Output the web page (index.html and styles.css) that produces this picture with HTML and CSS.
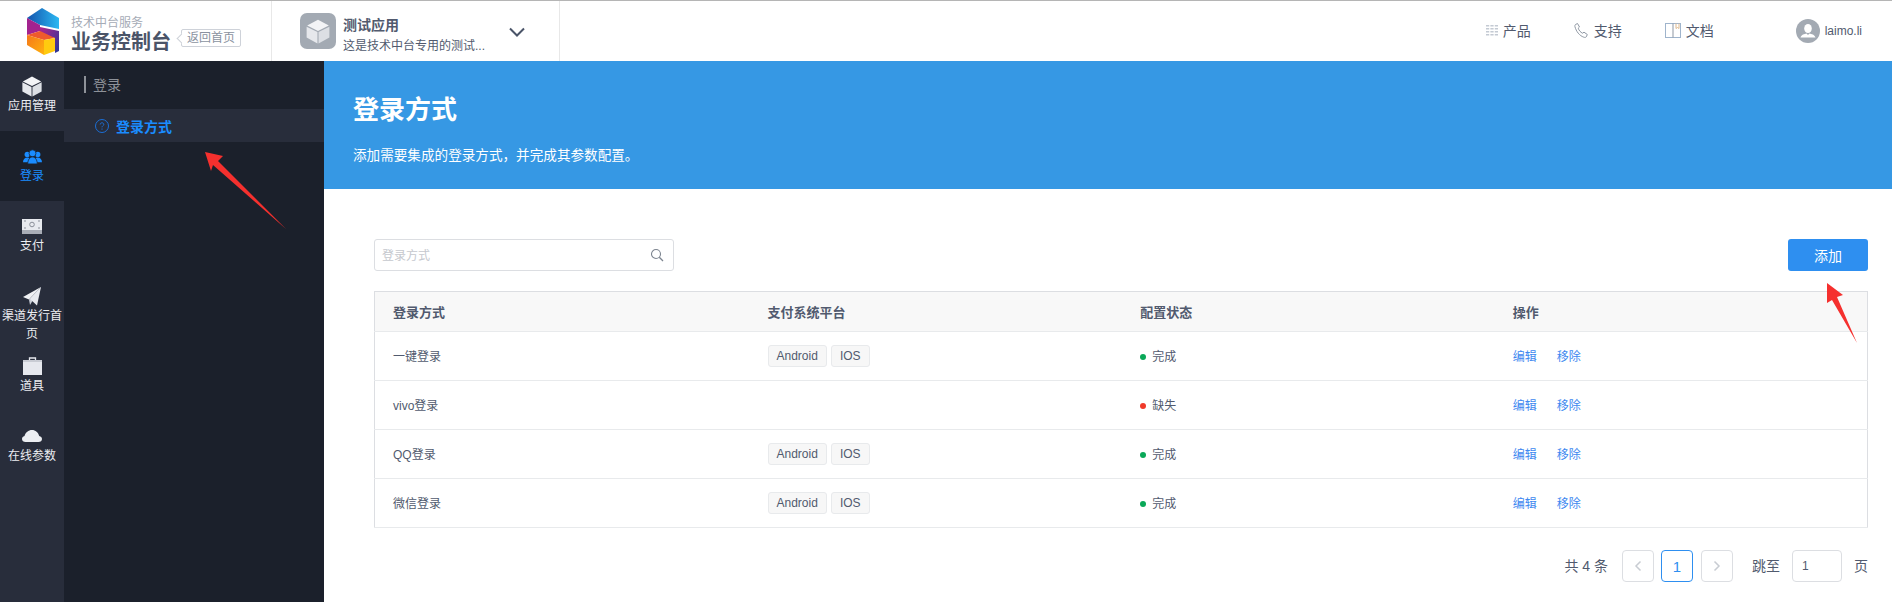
FILE: index.html
```html
<!DOCTYPE html>
<html lang="zh-CN">
<head>
    <meta charset="UTF-8">
    <meta name="viewport" content="width=device-width, initial-scale=1.0">
    <title>业务控制台</title>
    <link rel="stylesheet" href="styles.css">
</head>
<body>
    <header class="topbar">
        <div class="brand">
            <svg class="brand-logo" viewBox="0 0 36 48" width="36" height="48">
                <defs>
                    <linearGradient id="logo-blue" x1="0" y1="0" x2="1" y2="0">
                        <stop offset="0" stop-color="#1253ad"/>
                        <stop offset="1" stop-color="#2cb8f2"/>
                    </linearGradient>
                    <linearGradient id="logo-purple" x1="0" y1="0" x2="1" y2="1">
                        <stop offset="0" stop-color="#b3238c"/>
                        <stop offset="1" stop-color="#24389a"/>
                    </linearGradient>
                    <linearGradient id="logo-orange" x1="0" y1="0" x2="1" y2="1">
                        <stop offset="0" stop-color="#f5781a"/>
                        <stop offset="1" stop-color="#ffb20d"/>
                    </linearGradient>
                </defs>
                <polygon points="17,1 34,11 34,22 15,18 2,11" fill="url(#logo-blue)"/>
                <polygon points="2,11 15,18 15,24 2,28" fill="#a3238f"/>
                <polygon points="15,20 34,24 34,44 30,46 30,31 15,27" fill="url(#logo-purple)"/>
                <polygon points="2,28 15,24 30,31 19,33" fill="#ee5a2c"/>
                <polygon points="2,28 19,33 19,48 2,38" fill="url(#logo-orange)"/>
                <polygon points="19,33 30,31 30,44 19,48" fill="#ffcb0f"/>
            </svg>
            <div class="brand-text">
                <div class="brand-sub">技术中台服务</div>
                <div class="brand-name">业务控制台</div>
            </div>
            <a class="back-tag" href="#">返回首页</a>
        </div>
        <div class="app-picker">
            <div class="app-icon">
                <svg viewBox="0 0 24 24" width="26" height="26">
                    <polygon points="12,1.5 22,7 12,12 2,7" fill="#f3f4f6"/>
                    <polygon points="1.5,8 11.5,13 11.5,23.5 1.5,18" fill="#e6e8ec"/>
                    <polygon points="22.5,8 12.5,13 12.5,23.5 22.5,18" fill="#dcdfe4"/>
                </svg>
            </div>
            <div class="app-info">
                <div class="app-name">测试应用</div>
                <div class="app-desc">这是技术中台专用的测试...</div>
            </div>
            <svg class="app-chevron" viewBox="0 0 16 10" width="16" height="10">
                <path d="M1 1.5l7 7 7-7" fill="none" stroke="#4a5468" stroke-width="2"/>
            </svg>
        </div>
        <nav class="top-links">
            <a href="#">
                <svg viewBox="0 0 12 12" width="12" height="12">
                    <path d="M0 1h3.2v1.6H0zM4.4 1h3.2v1.6H4.400zM8.800 1H12v1.600H8.800zM0 4h3.200v1.600H0zM4.400 4h3.200v1.600H4.400zM8.800 4H12v1.600H8.800zM0 7h3.200v1.600H0zM4.400 7h3.200v1.600H4.400zM8.800 7H12v1.600H8.800zM0 10h3.200v1.600H0zM4.400 10h3.200v1.600H4.400zM8.800 10H12v1.600H8.800z" fill="#c4cad3"/>
                </svg>
                产品
            </a>
            <a href="#">
                <svg viewBox="0 0 15 15" width="15" height="15">
                    <path d="M1.500 1.500l2-1 2 3.500-1.300 1.200c.8 2.300 2.300 4 4.300 5l1.500-1 3.300 2.300-1 2.300c-.5.700-1.500.8-2.500.4C5.500 12.700 2.200 8.500.9 3.500c-.1-.8.100-1.500.6-2z" fill="none" stroke="#8f97a3" stroke-width="1"/>
                </svg>
                支持
            </a>
            <a href="#">
                <svg viewBox="0 0 16 15" width="16" height="15">
                    <rect x=".5" y=".5" width="15" height="14" fill="none" stroke="#9fb4cc"/>
                    <path d="M8 .5v14" stroke="#8f97a3" fill="none"/>
                    <path d="M11 .5v5l1.500-1 1.500 1v-5" fill="none" stroke="#e0b98c"/>
                </svg>
                文档
            </a>
        </nav>
        <div class="user">
            <svg viewBox="0 0 24 24" width="24" height="24">
                <circle cx="12" cy="12" r="12" fill="#a3aab3"/>
                <ellipse cx="12" cy="9.500" rx="3.800" ry="4.500" fill="#fff"/>
                <path d="M4.500 18.500c1-3 4-3.500 6-4l1.500 1.500 1.500-1.500c2 .5 5 1 6 4z" fill="#fff"/>
            </svg>
            <span>laimo.li</span>
        </div>
    </header>

    <div class="layout">
        <aside class="rail">
            <a class="rail-item" href="#">
                <span class="rail-icon">
                    <svg viewBox="0 0 24 24" width="22" height="22">
                        <polygon points="12,1.500 22,7 12,12 2,7" fill="#f3f4f6"/>
                        <polygon points="1.500,8 11.500,13 11.500,23.500 1.500,18" fill="#e6e8ec"/>
                        <polygon points="22.500,8 12.500,13 12.500,23.500 22.500,18" fill="#dcdfe4"/>
                    </svg>
                </span>
                应用管理
            </a>
            <a class="rail-item active" href="#">
                <span class="rail-icon">
                    <svg viewBox="0 0 18 14" width="19" height="15">
                        <circle cx="4" cy="5" r="2.500" fill="#1a8cff"/>
                        <circle cx="14" cy="5" r="2.500" fill="#1a8cff"/>
                        <path d="M0 12.500c0-3 2-4.500 4-4.500s3 1 3 4.500zM11 12.500c0-3.500 1-4.500 3-4.500s4 1.500 4 4.500z" fill="#1a8cff"/>
                        <circle cx="9" cy="4" r="3.300" fill="#1a8cff" stroke="#1b202b" stroke-width=".7"/>
                        <path d="M4.500 14c0-4 2-6.500 4.500-6.500s4.500 2.500 4.500 6.500z" fill="#1a8cff" stroke="#1b202b" stroke-width=".7"/>
                    </svg>
                </span>
                登录
            </a>
            <a class="rail-item" href="#">
                <span class="rail-icon">
                    <svg viewBox="0 0 20 15" width="20" height="15">
                        <rect x="0" y="0" width="20" height="11" fill="#e8eaef"/>
                        <rect x="0" y="11" width="20" height="4" fill="#a9adb6"/>
                        <circle cx="10" cy="5.500" r="2.300" fill="none" stroke="#8b8f99"/>
                        <path d="M2 2h2M16 2h2M2 9h2M16 9h2" stroke="#8b8f99"/>
                    </svg>
                </span>
                支付
            </a>
            <a class="rail-item" href="#">
                <span class="rail-icon">
                    <svg viewBox="0 0 18 19" width="18" height="19">
                        <polygon points="18,0 0,10 6,12.500" fill="#f0f1f4"/>
                        <polygon points="18,0 6,12.500 7,18" fill="#c9cdd6"/>
                        <polygon points="18,0 7,12 14,18.500" fill="#e8eaef"/>
                    </svg>
                </span>
                渠道发行首页
            </a>
            <a class="rail-item" href="#">
                <span class="rail-icon">
                    <svg viewBox="0 0 19 18" width="19" height="18">
                        <path d="M6.500 3V1h6v2" fill="none" stroke="#e6e8ee" stroke-width="1.300"/>
                        <rect x="0" y="3" width="19" height="3" fill="#c9ccd4"/>
                        <rect x="0" y="5" width="19" height="13" fill="#e6e8ee"/>
                    </svg>
                </span>
                道具
            </a>
            <a class="rail-item" href="#">
                <span class="rail-icon">
                    <svg viewBox="0 0 20 12" width="20" height="12">
                        <path d="M3.500 12C1.500 12 0 10.700 0 9c0-1.500 1-2.700 2.500-3C3.500 2.500 6.500 0 10 0c3.500 0 6.300 2.500 7.200 6 1.700.3 2.800 1.500 2.800 3 0 1.700-1.500 3-3.500 3z" fill="#eceef2"/>
                    </svg>
                </span>
                在线参数
            </a>
        </aside>

        <aside class="subnav">
            <div class="subnav-title">登录</div>
            <a class="subnav-item" href="#">
                <svg viewBox="0 0 14 14" width="14" height="14">
                    <circle cx="7" cy="7" r="6.500" fill="none" stroke="#1c6fd6"/>
                    <path d="M5.200 5.500c0-1 .8-1.700 1.800-1.700s1.800.7 1.800 1.600c0 1.300-1.800 1.400-1.800 2.900M7 9.500v1.200" fill="none" stroke="#1c6fd6"/>
                </svg>
                登录方式
            </a>
        </aside>

        <main class="content">
            <section class="banner">
                <h1>登录方式</h1>
                <p>添加需要集成的登录方式，并完成其参数配置。</p>
            </section>
            <section class="panel">
                <div class="toolbar">
                    <div class="search">
                        <span class="search-hint">登录方式</span>
                        <svg viewBox="0 0 14 14" width="14" height="14">
                            <circle cx="6" cy="6" r="4.500" fill="none" stroke="#7d8590" stroke-width="1.100"/>
                            <path d="M9.300 9.300l3.700 3.700" stroke="#7d8590" stroke-width="1.300"/>
                        </svg>
                    </div>
                    <button class="btn-add" type="button">添加</button>
                </div>
                <table class="list">
                    <thead>
                        <tr>
                            <th class="col-name">登录方式</th>
                            <th>支付系统平台</th>
                            <th>配置状态</th>
                            <th>操作</th>
                        </tr>
                    </thead>
                    <tbody>
                        <tr>
                            <td>一键登录</td>
                            <td class="cell-tags"><span class="tag">Android</span><span class="tag">IOS</span></td>
                            <td><span class="dot ok"></span>完成</td>
                            <td><a class="op" href="#">编辑</a><a class="op" href="#">移除</a></td>
                        </tr>
                        <tr>
                            <td>vivo登录</td>
                            <td class="cell-tags"></td>
                            <td><span class="dot bad"></span>缺失</td>
                            <td><a class="op" href="#">编辑</a><a class="op" href="#">移除</a></td>
                        </tr>
                        <tr>
                            <td>QQ登录</td>
                            <td class="cell-tags"><span class="tag">Android</span><span class="tag">IOS</span></td>
                            <td><span class="dot ok"></span>完成</td>
                            <td><a class="op" href="#">编辑</a><a class="op" href="#">移除</a></td>
                        </tr>
                        <tr>
                            <td>微信登录</td>
                            <td class="cell-tags"><span class="tag">Android</span><span class="tag">IOS</span></td>
                            <td><span class="dot ok"></span>完成</td>
                            <td><a class="op" href="#">编辑</a><a class="op" href="#">移除</a></td>
                        </tr>
                    </tbody>
                </table>
                <div class="pager">
                    <span class="pager-total">共 4 条</span>
                    <a class="page-btn" href="#">
                        <svg viewBox="0 0 8 12" width="8" height="12"><path d="M6.500 1.500L2 6l4.500 4.500" fill="none" stroke="#c8ccd2" stroke-width="1.500"/></svg>
                    </a>
                    <a class="page-btn current" href="#">1</a>
                    <a class="page-btn" href="#">
                        <svg viewBox="0 0 8 12" width="8" height="12"><path d="M1.500 1.500L6 6l-4.500 4.500" fill="none" stroke="#c8ccd2" stroke-width="1.500"/></svg>
                    </a>
                    <span class="pager-jump">跳至</span>
                    <div class="pager-input">1</div>
                    <span class="pager-unit">页</span>
                </div>
            </section>
        </main>
    </div>

    <!-- red arrows drawn on top of the screenshot -->
    <svg class="marks" viewBox="0 0 1892 602" width="1892" height="602">
        <polygon points="205,152 223,156 218,161 286,229 213,165 211,171" fill="#f5302e"/>
        <polygon points="1827,283 1843,295 1837,297 1857,343 1832,300 1827,303" fill="#f5302e"/>
    </svg>
</body>
</html>
```

FILE: styles.css
```css
/* General Styles */
* {
    box-sizing: border-box;
}

html, body {
    height: 100%;
}

body {
    margin: 0;
    display: flex;
    flex-direction: column;
    overflow: hidden;
    font-family: "Liberation Sans", "Noto Sans CJK SC", sans-serif;
    font-size: 12px;
    color: #515a6e;
    background-color: #fff;
}

a {
    text-decoration: none;
    color: inherit;
}

/* Header Styles */
.topbar {
    height: 61px;
    flex: none;
    display: flex;
    align-items: center;
    border-top: 1px solid #b5b5b5;
    background-color: #fff;
}

.brand {
    width: 272px;
    height: 100%;
    flex: none;
    display: flex;
    align-items: center;
    padding-left: 25px;
    border-right: 1px solid #e8e8e8;
}

.brand-logo {
    flex: none;
    margin-right: 10px;
}

.brand-text {
    padding-top: 7px;
}

.brand-sub {
    font-size: 12px;
    line-height: 16px;
    margin-bottom: -1px;
    color: #a5abb6;
}

.brand-name {
    font-size: 20px;
    line-height: 24px;
    font-weight: bold;
    color: #4a5468;
}

.back-tag {
    position: relative;
    margin: 14px 0 0 10px;
    width: 60px;
    height: 18px;
    line-height: 16px;
    text-align: center;
    border: 1px solid #ced2d9;
    border-radius: 2px;
    color: #8a92a0;
}

.back-tag::before {
    content: "";
    position: absolute;
    left: -4px;
    top: 5px;
    width: 6px;
    height: 6px;
    background-color: #fff;
    border-left: 1px solid #ced2d9;
    border-bottom: 1px solid #ced2d9;
    transform: rotate(45deg);
}

.app-picker {
    width: 288px;
    height: 100%;
    flex: none;
    display: flex;
    align-items: center;
    padding-left: 28px;
    border-right: 1px solid #e8e8e8;
}

.app-icon {
    width: 36px;
    height: 36px;
    flex: none;
    display: flex;
    align-items: center;
    justify-content: center;
    background-color: #a3aab3;
    border-radius: 7px;
}

.app-info {
    width: 166px;
    margin-left: 7px;
    padding-top: 7px;
}

.app-name {
    font-size: 14px;
    line-height: 20px;
    font-weight: bold;
    color: #515a6e;
}

.app-desc {
    margin-top: 2px;
    font-size: 12px;
    line-height: 18px;
    color: #515a6e;
    white-space: nowrap;
}

.app-chevron {
    margin-top: 2px;
}

.top-links {
    margin-left: auto;
    padding-bottom: 2px;
    display: flex;
    align-items: center;
    gap: 43px;
}

.top-links a {
    display: flex;
    align-items: center;
    gap: 5px;
    font-size: 14px;
    color: #515a6e;
}

.user {
    display: flex;
    align-items: center;
    gap: 5px;
    margin: 0 30px 0 82px;
    font-size: 12px;
    color: #515a6e;
}

/* Side Menus */
.layout {
    flex: 1;
    display: flex;
    min-height: 0;
}

.rail {
    width: 64px;
    flex: none;
    background-color: #282d3b;
}

.rail-item {
    display: block;
    height: 70px;
    padding-top: 15px;
    text-align: center;
    line-height: 18px;
    color: #eceef2;
}

.rail-item.active {
    background-color: #1b202b;
    color: #1a8cff;
}

.rail-icon {
    display: flex;
    align-items: center;
    justify-content: center;
    height: 20px;
    margin-bottom: 1px;
}

.subnav {
    width: 260px;
    flex: none;
    background-color: #1b202b;
}

.subnav-title {
    height: 48px;
    margin-left: 20px;
    padding-left: 9px;
    font-size: 14px;
    line-height: 48px;
    color: #8e9299;
    position: relative;
}

.subnav-title::before {
    content: "";
    position: absolute;
    left: 0;
    top: 15px;
    width: 2px;
    height: 17px;
    background-color: #8e9299;
}

.subnav-item {
    display: flex;
    align-items: center;
    gap: 7px;
    height: 33px;
    padding-left: 31px;
    font-size: 14px;
    font-weight: bold;
    color: #1a8cff;
    background-color: #282d3b;
}

/* Main Content */
.content {
    flex: 1;
    min-width: 0;
}

.banner {
    height: 128px;
    padding: 34px 0 0 29px;
    background-color: #3698e4;
    color: #fff;
}

.banner h1 {
    margin: 0;
    font-size: 26px;
    line-height: 30px;
    font-weight: bold;
}

.banner p {
    margin: 21px 0 0;
    font-size: 13.6px;
    line-height: 20px;
}

.panel {
    padding: 50px 24px 0 50px;
}

.toolbar {
    display: flex;
    justify-content: space-between;
    height: 32px;
    margin-bottom: 20px;
}

.search {
    width: 300px;
    display: flex;
    align-items: center;
    justify-content: space-between;
    padding: 0 9px 0 7px;
    border: 1px solid #dcdee2;
    border-radius: 3px;
    color: #c5c8ce;
}

.search-hint {
    padding-bottom: 2px;
}

.btn-add {
    width: 80px;
    border: none;
    border-radius: 3px;
    font-family: inherit;
    font-size: 14px;
    color: #fff;
    background-color: #2e8ff0;
}

/* Table */
.list {
    width: 100%;
    table-layout: fixed;
    border-collapse: collapse;
    border: 1px solid #dcdee2;
}

.list th, .list td {
    padding: 0 0 0 18px;
    text-align: left;
}

.list .col-name {
    width: 375px;
}

.list th {
    height: 40px;
    font-size: 13px;
    font-weight: bold;
    background-color: #f8f8f8;
    border-bottom: 1px solid #e8eaec;
}

.list td {
    height: 49px;
    padding-bottom: 2px;
    border-bottom: 1px solid #e8eaec;
}

.list .cell-tags {
    padding-bottom: 0;
}

.tag {
    display: inline-block;
    height: 22px;
    line-height: 20px;
    padding: 0 8px;
    margin-right: 4px;
    background-color: #f7f7f7;
    border: 1px solid #e8eaec;
    border-radius: 3px;
}

.dot {
    display: inline-block;
    width: 6px;
    height: 6px;
    margin-right: 6px;
    border-radius: 50%;
    vertical-align: 1px;
}

.dot.ok {
    background-color: #0aa858;
}

.dot.bad {
    background-color: #f03a2a;
}

.op {
    margin-right: 20px;
    color: #3e88f0;
}

/* Pagination */
.pager {
    display: flex;
    align-items: center;
    justify-content: flex-end;
    margin-top: 22px;
    font-size: 14px;
}

.pager-total {
    margin-right: 14px;
    padding-bottom: 3px;
}

.pager-jump, .pager-unit {
    padding-bottom: 2px;
}

.page-btn {
    width: 32px;
    height: 32px;
    margin-right: 7px;
    display: flex;
    align-items: center;
    justify-content: center;
    border: 1px solid #dcdee2;
    border-radius: 4px;
}

.page-btn.current {
    margin-right: 8px;
    border-color: #2e8ff0;
    color: #2e8ff0;
    font-size: 15px;
}

.pager-jump {
    margin-left: 12px;
}

.pager-input {
    width: 50px;
    height: 32px;
    margin: 0 12px;
    padding-left: 9px;
    line-height: 30px;
    font-size: 12px;
    border: 1px solid #dcdee2;
    border-radius: 4px;
}

/* Annotations */
.marks {
    position: absolute;
    left: 0;
    top: 0;
    pointer-events: none;
}
```
